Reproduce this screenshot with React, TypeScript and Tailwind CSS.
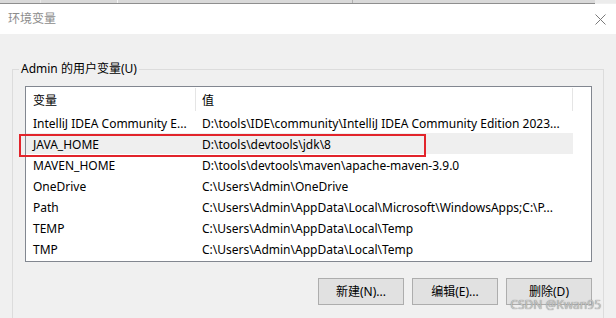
import React from "react";

const rows = [
  { name: "IntelliJ IDEA Community E...", value: "D:\\tools\\IDE\\community\\IntelliJ IDEA Community Edition 2023..." },
  { name: "JAVA_HOME", value: "D:\\tools\\devtools\\jdk\\8", selected: true },
  { name: "MAVEN_HOME", value: "D:\\tools\\devtools\\maven\\apache-maven-3.9.0" },
  { name: "OneDrive", value: "C:\\Users\\Admin\\OneDrive" },
  { name: "Path", value: "C:\\Users\\Admin\\AppData\\Local\\Microsoft\\WindowsApps;C:\\P..." },
  { name: "TEMP", value: "C:\\Users\\Admin\\AppData\\Local\\Temp" },
  { name: "TMP", value: "C:\\Users\\Admin\\AppData\\Local\\Temp" },
];

const buttons = ["新建(N)...", "编辑(E)...", "删除(D)"];

export default function App() {
  return (
    <div
      className="relative w-[616px] h-[318px] overflow-hidden bg-[#f0f0f0] text-[12px] text-black"
      style={{ fontFamily: '"Noto Sans", "Noto Sans CJK SC", sans-serif' }}
    >
      {/* strip of the window behind */}
      <div className="flex h-[3px] bg-[#d9d9d9]">
        <div className="w-[40px]" />
        <div className="w-px bg-[#e8e8e8]" />
        <div className="w-[76px]" />
        <div className="w-px bg-[#f4f4f4]" />
        <div className="w-[234px]" />
        <div className="w-px bg-[#b0b0b0]" />
        <div className="flex-1" />
        <div className="w-[21px] bg-[#ececec]" />
      </div>
      <div className="h-px bg-[#8e8e8e] mr-[21px]" />

      {/* title bar */}
      <div className="flex h-[30px] items-center justify-between bg-white pl-[8px] pr-[10px]">
        <span className="text-[#8c8c8c] leading-none">环境变量</span>
        <svg width="11" height="11" viewBox="0 0 11 11" className="text-[#7a7a7a]">
          <path d="M0.5 0.5L10.5 10.5M10.5 0.5L0.5 10.5" stroke="currentColor" strokeWidth="1" />
        </svg>
      </div>

      {/* group box */}
      <fieldset className="mx-[12px] mt-[27px] h-[300px] border border-[#dcdcdc]">
        <legend className="ml-[6px] px-[2px] leading-[16px]">Admin 的用户变量(U)</legend>

        <div className="ml-[12px] mr-[11px] mt-[9px] h-[176px] border border-[#828790] bg-white">
          <div className="flex h-[25px] items-center">
            <div className="w-[169px] pl-[7px] pt-[2px]">变量</div>
            <div className="h-[23px] w-px bg-[#e5e5e5]" />
            <div className="w-[376px] pl-[6px] pt-[2px]">值</div>
            <div className="h-[23px] w-px bg-[#e5e5e5]" />
          </div>
          {rows.map((r) => (
            <div
              key={r.name}
              className={`flex h-[21px] w-[547px] items-center whitespace-nowrap pt-[2px] ${r.selected ? "bg-[#efefef]" : ""}`}
            >
              <div className="w-[170px] overflow-hidden pl-[7px]">{r.name}</div>
              <div className="w-[377px] overflow-hidden pl-[6px]">{r.value}</div>
            </div>
          ))}
        </div>

        <div className="mr-[11px] mt-[16px] flex justify-end gap-[8px]">
          {buttons.map((b) => (
            <button
              key={b}
              type="button"
              className="h-[27px] w-[86px] border border-[#adadad] bg-[#e1e1e1] pt-[1px] text-center leading-none"
            >
              {b}
            </button>
          ))}
        </div>
      </fieldset>

      {/* annotation box */}
      <div className="absolute left-[19px] top-[134px] h-[23px] w-[407px] border-2 border-[#e2242b]" />

      {/* watermark */}
      <div
        className="absolute right-[15px] top-[296px] text-[12px] text-[#c8c8c8]"
        style={{ textShadow: "0 0 1px #6b6b6b" }}
      >
        CSDN @Kwan95
      </div>
    </div>
  );
}
